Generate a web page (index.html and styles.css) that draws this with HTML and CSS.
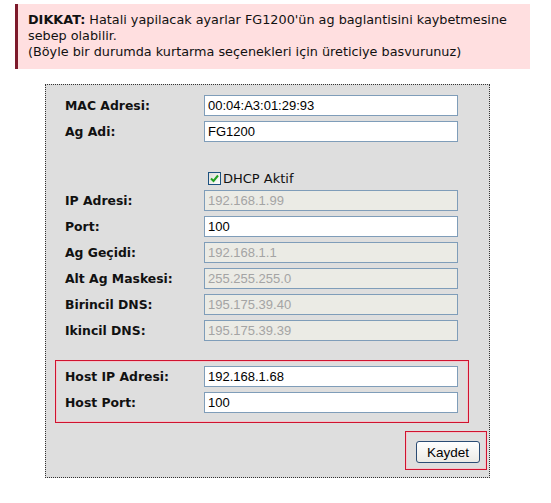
FILE: index.html
```html
<!DOCTYPE html>
<html lang="tr">
<head>
  <meta charset="UTF-8">
  <title>FG1200 - Ag Ayarlari</title>
  <link rel="stylesheet" href="styles.css">
</head>
<body>

  <!-- uyari -->
  <div class="warning">
    <b>DIKKAT:</b> Hatali yapilacak ayarlar FG1200'ün ag baglantisini kaybetmesine sebep olabilir.<br>
    (Böyle bir durumda kurtarma seçenekleri için üreticiye basvurunuz)
  </div>

  <!-- ayar formu -->
  <form class="panel">
    <div class="row">
      <label>MAC Adresi:</label>
      <input type="text" value="00:04:A3:01:29:93">
    </div>
    <div class="row">
      <label>Ag Adi:</label>
      <input type="text" value="FG1200">
    </div>
    <div class="row"></div>
    <div class="row check-row">
      <label></label>
      <span class="check">
        <svg width="9" height="9" viewBox="0 0 9 9"><path d="M1 4.5 L3.5 7 L8 1.5" fill="none" stroke="#21a121" stroke-width="2"/></svg>
      </span>
      <span class="check-text">DHCP Aktif</span>
    </div>
    <div class="row">
      <label>IP Adresi:</label>
      <input type="text" value="192.168.1.99" disabled>
    </div>
    <div class="row">
      <label>Port:</label>
      <input type="text" value="100">
    </div>
    <div class="row">
      <label>Ag Geçidi:</label>
      <input type="text" value="192.168.1.1" disabled>
    </div>
    <div class="row">
      <label>Alt Ag Maskesi:</label>
      <input type="text" value="255.255.255.0" disabled>
    </div>
    <div class="row">
      <label>Birincil DNS:</label>
      <input type="text" value="195.175.39.40" disabled>
    </div>
    <div class="row">
      <label>Ikincil DNS:</label>
      <input type="text" value="195.175.39.39" disabled>
    </div>

    <div class="host-box">
      <div class="row">
        <label>Host IP Adresi:</label>
        <input type="text" value="192.168.1.68">
      </div>
      <div class="row">
        <label>Host Port:</label>
        <input type="text" value="100">
      </div>
    </div>

    <div class="save-box">
      <button type="button" class="save-btn">Kaydet</button>
    </div>
  </form>

</body>
</html>
```

FILE: styles.css
```css
* { box-sizing: border-box; }
body { margin: 0; padding: 4px 0 0 15px; background: #fff; font-family: 'DejaVu Sans', Verdana, sans-serif; color: #111; }

/* uyari kutusu */
.warning {
  width: 515px;
  background: #ffdfe0;
  border-left: 3px solid #7d1a2b;
  padding: 8px 10px 9px 10px;
  font-size: 12.8px;
  line-height: 16px;
}

/* form paneli */
.panel {
  width: 445px;
  margin: 15px 0 0 30px;
  background: #dedede;
  border: 1px dotted #333;
  padding: 10px 0 7px 0;
  display: flex;
  flex-direction: column;
}
.row {
  display: flex;
  align-items: center;
  height: 21px;
  margin-bottom: 5px;
  padding-left: 19px;
}
.row label {
  width: 139px;
  font-weight: bold;
  font-size: 12.4px;
  color: #111;
}
.row input {
  width: 254px;
  height: 21px;
  border: 1px solid #7f9db9;
  background: #fff;
  padding: 0 3px;
  font-family: 'Liberation Sans', Arial, sans-serif;
  font-size: 13px;
  color: #000;
}
.row input:disabled { background: #ebebe5; color: #a4a4a4; }

/* DHCP */
.check-row { height: 13px; margin-top: -1px; }
.check {
  width: 13px;
  height: 13px;
  margin-left: 4px;
  border: 1px solid #1c5180;
  background: linear-gradient(135deg, #dcdcd7, #fff);
  display: flex;
  align-items: center;
  justify-content: center;
}
.check-text { margin-left: 2px; font-size: 13px; }

/* host alani */
.host-box {
  width: 414px;
  margin: 14px 0 0 9px;
  border: 1px solid #d0132f;
  box-shadow: inset 0 0 0 1px #f2c7cd;
  padding: 5px 0 4px 0;
}
.host-box .row { padding-left: 9px; }

/* kaydet */
.save-box {
  align-self: flex-end;
  width: 82px;
  margin: 8px 2px 0 0;
  border: 1px solid #d0132f;
  box-shadow: inset 0 0 0 1px #f2c7cd;
  padding: 9px 6px 6px 10px;
}
.save-btn {
  display: block;
  width: 64px;
  height: 22px;
  border: 1px solid #2b4c74;
  border-radius: 3px;
  background: linear-gradient(#ffffff, #ecebe6);
  font-family: 'Liberation Sans', Arial, sans-serif;
  font-size: 13.5px;
  color: #000;
  padding: 0;
}
```
